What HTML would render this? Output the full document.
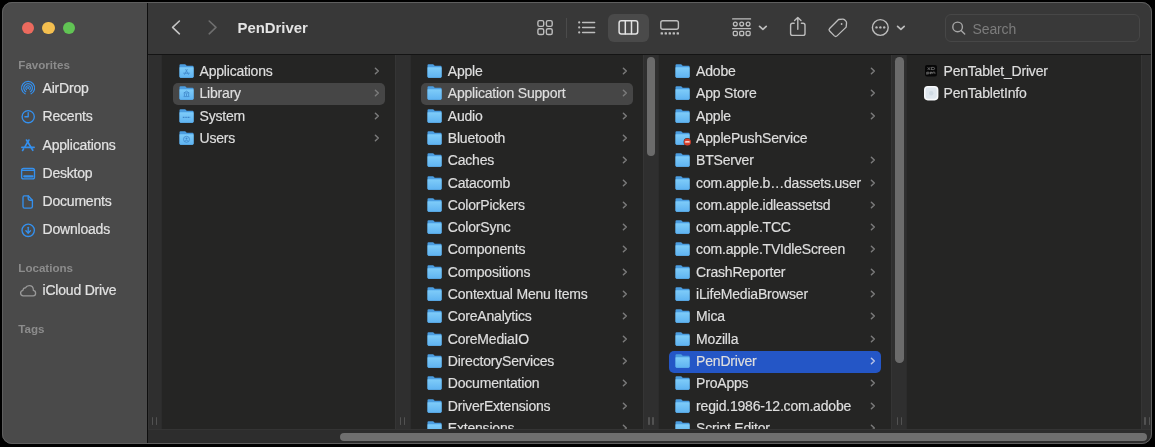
<!DOCTYPE html><html><head><meta charset="utf-8"><style>
*{margin:0;padding:0;box-sizing:border-box}
html,body{width:1155px;height:447px;background:#000;overflow:hidden}
body{font-family:"Liberation Sans",sans-serif;color:#dedede;position:relative}
.row,.sitem{letter-spacing:-0.2px}
.row,.sitem{-webkit-text-stroke:0.2px currentColor}
.win{position:absolute;left:2px;top:2px;width:1150px;height:442px;border-radius:10px;overflow:hidden;background:#262626;will-change:transform}
.abs{position:absolute}
.side{position:absolute;left:0;top:0;width:147px;height:447px;background:#4a4a4a}
.sdiv{position:absolute;left:147px;top:0;width:1px;height:447px;background:#0e0e0e}
.tb{position:absolute;left:148px;top:0;width:1007px;height:54px;background:#383838}
.tbline{position:absolute;left:148px;top:54px;width:1007px;height:1px;background:#141414}
.colbg{position:absolute;top:55px;height:374px;background:#252524}
.strip{position:absolute;top:55px;height:374px;background:#2f2f2f;border-left:1px solid #353535;border-right:1px solid #2c2c2c}
.handle{position:absolute;width:1.4px;height:7.4px;border-radius:0.7px;background:#525252}
.row{position:absolute;height:22.4px;font-size:14px;line-height:22.4px;white-space:nowrap}
.sel{position:absolute;height:21.6px;border-radius:5px;background:#464646}
.selb{background:#2456c6}
.fi{position:absolute;left:0;top:4px;overflow:visible}
.ch{position:absolute;top:7px}
.lbl{position:absolute;left:21px;top:0}
.sb{position:absolute;width:8.6px;border-radius:4.3px;background:#6b6b6b}
.htrack{position:absolute;left:148px;top:429px;width:1007px;height:15px;background:#2d2d2d;border-top:1px solid #343434}
.hthumb{position:absolute;left:339.5px;top:432.9px;width:807.5px;height:7.9px;border-radius:4px;background:#6f6f6f}
.border{position:absolute;left:2px;top:2px;width:1150px;height:442px;border-radius:10px;border:1px solid #5f5f5f;pointer-events:none}
.shead{position:absolute;left:18.3px;font-size:11.6px;font-weight:bold;color:#8c8c8c}
.sitem{position:absolute;left:42.5px;font-size:14px;line-height:16px;color:#e2e2e2}
.sico{position:absolute;left:18px}
</style></head><body>
<svg width="0" height="0" style="position:absolute"><defs><linearGradient id="fg" x1="0" y1="0" x2="0" y2="1"><stop offset="0" stop-color="#63b6f1"/><stop offset="0.12" stop-color="#7ccaf8"/><stop offset="1" stop-color="#5fb3f1"/></linearGradient></defs></svg>
<div class="win"><div class="abs" style="left:-2px;top:-2px;width:1155px;height:447px">

<div class="side"></div><div class="sdiv"></div>
<div class="abs" style="left:22px;top:21.7px;width:12.4px;height:12.4px;border-radius:50%;background:#ec6a5e"></div>
<div class="abs" style="left:42.3px;top:21.7px;width:12.4px;height:12.4px;border-radius:50%;background:#f4bf4f"></div>
<div class="abs" style="left:62.6px;top:21.7px;width:12.4px;height:12.4px;border-radius:50%;background:#61c454"></div>
<div class="shead" style="top:58px">Favorites</div>
<svg class="abs" style="left:19px;top:79px" width="18" height="18" viewBox="19 79 18 18" fill="none" stroke="#3490ee" stroke-width="1.2" stroke-linecap="round"><path d="M25.13 93.84 A6.55 6.55 0 1 1 31.07 93.84"/><path d="M25.73 91.65 A4.35 4.35 0 1 1 30.47 91.65"/><path d="M26.51 89.59 A2.25 2.25 0 1 1 29.69 89.59"/><circle cx="28.1" cy="88.0" r="1.0" fill="#3490ee" stroke="none"/></svg>
<div class="sitem" style="top:80.30px">AirDrop</div>
<svg class="abs" style="left:19px;top:107px" width="18" height="18" viewBox="19 107 18 18" fill="none" stroke="#3490ee" stroke-width="1.35" stroke-linecap="round" stroke-linejoin="round"><circle cx="28.2" cy="116.7" r="6.1"/><path d="M28.2 112.6 V116.7 H24.9"/></svg>
<div class="sitem" style="top:108.45px">Recents</div>
<svg class="abs" style="left:19px;top:136px" width="18" height="18" viewBox="19 136 18 18" fill="none" stroke="#3490ee" stroke-width="1.65" stroke-linecap="round"><path d="M28.9 140 L25.0 146.6"/><path d="M23.6 148.9 L22.6 150.5"/><path d="M26.5 140 L32.8 150.3"/><path d="M21.9 147.4 H34.1"/></svg>
<div class="sitem" style="top:136.60px">Applications</div>
<svg class="abs" style="left:19px;top:164px" width="18" height="18" viewBox="19 164 18 18" fill="none" stroke="#3490ee" stroke-width="1.35" stroke-linecap="round"><rect x="21.6" y="168.5" width="12.9" height="10.4" rx="2"/><path d="M21.8 170.4 H34.3"/><path d="M24.3 176.3 H32.5" stroke-width="2.3"/></svg>
<div class="sitem" style="top:164.75px">Desktop</div>
<svg class="abs" style="left:19px;top:192px" width="18" height="18" viewBox="19 192 18 18" fill="none" stroke="#3490ee" stroke-width="1.35" stroke-linecap="round" stroke-linejoin="round"><path d="M24.3 195.8 H28.2 L32.4 200.2 V206.4 Q32.4 208.1 30.7 208.1 H24.6 Q23.0 208.1 23.0 206.4 V197.5 Q23.0 195.8 24.3 195.8 Z"/><path d="M28.2 196.0 V198.8 Q28.2 200.2 29.6 200.2 H32.2"/></svg>
<div class="sitem" style="top:192.90px">Documents</div>
<svg class="abs" style="left:19px;top:221px" width="18" height="18" viewBox="19 221 18 18" fill="none" stroke="#3490ee" stroke-width="1.35" stroke-linecap="round" stroke-linejoin="round"><circle cx="28.2" cy="230.3" r="6.2"/><path d="M28.2 227.3 V233"/><path d="M25.9 230.8 L28.2 233.1 L30.5 230.8"/></svg>
<div class="sitem" style="top:221.05px">Downloads</div>
<div class="shead" style="top:261.3px">Locations</div>
<svg class="abs" style="left:18px;top:282px" width="20" height="17" viewBox="18 282 20 17" fill="none" stroke="#999" stroke-width="1.3" stroke-linejoin="round"><path d="M23.2 295.8 H33.2 Q35.6 295.8 35.6 293.2 Q35.6 290.8 33.4 290.4 Q33.4 285.6 29.2 285.6 Q26.6 285.6 25.4 287.9 Q23.4 287.6 22.9 290.3 Q20.6 290.9 20.6 293.1 Q20.6 295.8 23.2 295.8 Z"/></svg>
<div class="sitem" style="top:282.3px">iCloud Drive</div>
<div class="shead" style="top:322.1px">Tags</div>
<div class="tb"></div><div class="tbline"></div>
<div class="abs" style="left:237.5px;top:20.3px;font-size:14.9px;line-height:17px;font-weight:bold;color:#e4e4e4">PenDriver</div>
<svg class="abs" style="left:160px;top:12px" width="70" height="30" viewBox="160 12 70 30" fill="none" stroke-linecap="round" stroke-linejoin="round"><path d="M179.4 21 L172.6 27.4 L179.4 33.8" stroke="#c4c4c4" stroke-width="1.6"/><path d="M209.2 21 L216 27.4 L209.2 33.8" stroke="#6e6e6e" stroke-width="1.6"/></svg>
<div class="abs" style="left:607.6px;top:13.6px;width:41.2px;height:28.7px;border-radius:6px;background:#4a4a4a"></div>
<div class="abs" style="left:566px;top:18px;width:1px;height:20px;background:#4b4b4b"></div>
<svg class="abs" style="left:520px;top:8px" width="420" height="40" viewBox="520 8 420 40" fill="none" stroke="#bdbdbd" stroke-width="1.4" stroke-linecap="round" stroke-linejoin="round">
<rect x="537.9" y="20.6" width="5.8" height="5.8" rx="1.6"/><rect x="546.4" y="20.6" width="5.8" height="5.8" rx="1.6"/>
<rect x="537.9" y="28.7" width="5.8" height="5.8" rx="1.6"/><rect x="546.4" y="28.7" width="5.8" height="5.8" rx="1.6"/>
<circle cx="579.2" cy="22.4" r="1.1" fill="#bdbdbd" stroke="none"/><circle cx="579.2" cy="27.4" r="1.1" fill="#bdbdbd" stroke="none"/><circle cx="579.2" cy="32.4" r="1.1" fill="#bdbdbd" stroke="none"/>
<path d="M582.6 22.4 H594.6 M582.6 27.4 H594.6 M582.6 32.4 H594.6" stroke-width="1.5"/>
<g stroke="#e2e2e2" stroke-width="1.5"><rect x="619.1" y="20.8" width="18.6" height="13.2" rx="2.2"/><path d="M625.3 21 V33.8 M631.5 21 V33.8"/></g>
<rect x="660.8" y="20.7" width="17.6" height="8.6" rx="2"/>
<g fill="#bdbdbd" stroke="none"><rect x="660.6" y="32.2" width="2.4" height="2.4" rx="0.6"/><rect x="664.6" y="32.2" width="2.4" height="2.4" rx="0.6"/><rect x="668.6" y="32.2" width="2.4" height="2.4" rx="0.6"/><rect x="672.6" y="32.2" width="2.4" height="2.4" rx="0.6"/><rect x="676.6" y="32.2" width="2.4" height="2.4" rx="0.6"/></g>
<path d="M732.6 18.9 H750.6 M732.6 28.7 H750.6" stroke-width="1.2"/>
<circle cx="735.3" cy="24.1" r="1.9" stroke-width="1.3"/><circle cx="741.7" cy="24.1" r="1.9" stroke-width="1.3"/><circle cx="748.1" cy="24.1" r="1.9" stroke-width="1.3"/>
<rect x="733.3" y="31.3" width="4" height="4.2" rx="1" stroke-width="1.3"/><rect x="739.7" y="31.3" width="4" height="4.2" rx="1" stroke-width="1.3"/><rect x="746.1" y="31.3" width="4" height="4.2" rx="1" stroke-width="1.3"/>
<path d="M759.6 26.4 L762.9 29.4 L766.2 26.4" stroke-width="1.7"/>
<path d="M794.2 23.2 H792.6 Q790.6 23.2 790.6 25.2 V33.4 Q790.6 35.4 792.6 35.4 H803.0 Q805.0 35.4 805.0 33.4 V25.2 Q805.0 23.2 803.0 23.2 H801.4"/>
<path d="M797.8 29.2 V17.6 M794.6 20.6 L797.8 17.4 L801.0 20.6"/>
<path transform="translate(837.6 27.6) scale(0.94) translate(-837.6 -27.6)" d="M838.6 19.0 L843.0 18.6 Q844.2 18.5 845.0 19.3 L846.4 20.7 Q847.2 21.5 847.1 22.7 L846.7 27.1 L837.0 36.4 Q835.6 37.7 834.2 36.4 L829.1 31.3 Q827.8 29.9 829.1 28.6 Z"/>
<circle cx="841.6" cy="24.0" r="0.9" fill="#bdbdbd" stroke="none"/>
<circle cx="880.3" cy="27.5" r="7.9"/>
<circle cx="876.5" cy="27.4" r="1.2" fill="#bdbdbd" stroke="none"/><circle cx="880.4" cy="27.4" r="1.2" fill="#bdbdbd" stroke="none"/><circle cx="884.2" cy="27.4" r="1.2" fill="#bdbdbd" stroke="none"/>
<path d="M897.6 26.4 L900.9 29.4 L904.2 26.4" stroke-width="1.7"/>
</svg>
<div class="colbg" style="left:148px;width:1007px"></div>
<div class="strip" style="left:148px;width:14px"></div>
<div class="strip" style="left:394.8px;width:16px"></div>
<div class="strip" style="left:643.1px;width:16px"></div>
<div class="strip" style="left:891.4px;width:16px"></div>
<div class="strip" style="left:1140.5px;width:14px"></div>
<div class="handle" style="left:151.60px;top:417.4px"></div><div class="handle" style="left:155.70px;top:417.4px"></div>
<div class="handle" style="left:399.90px;top:417.4px"></div><div class="handle" style="left:404.00px;top:417.4px"></div>
<div class="handle" style="left:648.20px;top:417.4px"></div><div class="handle" style="left:652.30px;top:417.4px"></div>
<div class="handle" style="left:896.50px;top:417.4px"></div><div class="handle" style="left:900.60px;top:417.4px"></div>
<div class="handle" style="left:1144.40px;top:417.4px"></div><div class="handle" style="left:1148.50px;top:417.4px"></div>
<div class="row" style="left:178.5px;top:60.0px;width:210px"><svg class="fi" width="15" height="14" viewBox="0 0 15 14"><path d="M0.5 1.2 Q0.5 0.2 1.5 0.2 H5.8 Q6.4 0.2 6.9 0.7 L7.6 1.7 H13.5 Q14.6 1.7 14.6 2.8 V12.6 Q14.6 13.7 13.5 13.7 H1.6 Q0.5 13.7 0.5 12.6 Z" fill="#4b9de0"/><path d="M0.5 3.7 Q0.5 2.9 1.3 2.9 H13.8 Q14.6 2.9 14.6 3.7 V12.6 Q14.6 13.7 13.5 13.7 H1.6 Q0.5 13.7 0.5 12.6 Z" fill="url(#fg)"/><path d="M8.2 5.6 L5.6 10.4 M6.8 5.6 L9.4 10.4 M4.6 9.2 H10.4" stroke="#3f86c9" stroke-width="0.8" fill="none" stroke-linecap="round"/></svg><span class="lbl">Applications</span><svg class="ch" style="left:195.3px" width="6" height="8" viewBox="0 0 6 8"><path d="M1.4 1.2 L4.3 4 L1.4 6.8" fill="none" stroke="#7b7b7b" stroke-width="1.5" stroke-linecap="round" stroke-linejoin="round"/></svg></div>
<div class="sel" style="left:172.6px;top:83.21px;width:212.3px"></div>
<div class="row" style="left:178.5px;top:82.31px;width:210px"><svg class="fi" width="15" height="14" viewBox="0 0 15 14"><path d="M0.5 1.2 Q0.5 0.2 1.5 0.2 H5.8 Q6.4 0.2 6.9 0.7 L7.6 1.7 H13.5 Q14.6 1.7 14.6 2.8 V12.6 Q14.6 13.7 13.5 13.7 H1.6 Q0.5 13.7 0.5 12.6 Z" fill="#4b9de0"/><path d="M0.5 3.7 Q0.5 2.9 1.3 2.9 H13.8 Q14.6 2.9 14.6 3.7 V12.6 Q14.6 13.7 13.5 13.7 H1.6 Q0.5 13.7 0.5 12.6 Z" fill="url(#fg)"/><path d="M4.8 7.0 L7.5 5.2 L10.2 7.0 Z M5.4 7.6 V10.0 M7.5 7.6 V10.0 M9.6 7.6 V10.0 M4.6 10.6 H10.4" stroke="#3f86c9" stroke-width="0.8" fill="none" stroke-linejoin="round"/></svg><span class="lbl">Library</span><svg class="ch" style="left:195.3px" width="6" height="8" viewBox="0 0 6 8"><path d="M1.4 1.2 L4.3 4 L1.4 6.8" fill="none" stroke="#7b7b7b" stroke-width="1.5" stroke-linecap="round" stroke-linejoin="round"/></svg></div>
<div class="row" style="left:178.5px;top:104.62px;width:210px"><svg class="fi" width="15" height="14" viewBox="0 0 15 14"><path d="M0.5 1.2 Q0.5 0.2 1.5 0.2 H5.8 Q6.4 0.2 6.9 0.7 L7.6 1.7 H13.5 Q14.6 1.7 14.6 2.8 V12.6 Q14.6 13.7 13.5 13.7 H1.6 Q0.5 13.7 0.5 12.6 Z" fill="#4b9de0"/><path d="M0.5 3.7 Q0.5 2.9 1.3 2.9 H13.8 Q14.6 2.9 14.6 3.7 V12.6 Q14.6 13.7 13.5 13.7 H1.6 Q0.5 13.7 0.5 12.6 Z" fill="url(#fg)"/><path d="M3.8 8.3 H11.2" stroke="#3f86c9" stroke-width="1.2" stroke-dasharray="1.2 0.5" fill="none"/></svg><span class="lbl">System</span><svg class="ch" style="left:195.3px" width="6" height="8" viewBox="0 0 6 8"><path d="M1.4 1.2 L4.3 4 L1.4 6.8" fill="none" stroke="#7b7b7b" stroke-width="1.5" stroke-linecap="round" stroke-linejoin="round"/></svg></div>
<div class="row" style="left:178.5px;top:126.92999999999999px;width:210px"><svg class="fi" width="15" height="14" viewBox="0 0 15 14"><path d="M0.5 1.2 Q0.5 0.2 1.5 0.2 H5.8 Q6.4 0.2 6.9 0.7 L7.6 1.7 H13.5 Q14.6 1.7 14.6 2.8 V12.6 Q14.6 13.7 13.5 13.7 H1.6 Q0.5 13.7 0.5 12.6 Z" fill="#4b9de0"/><path d="M0.5 3.7 Q0.5 2.9 1.3 2.9 H13.8 Q14.6 2.9 14.6 3.7 V12.6 Q14.6 13.7 13.5 13.7 H1.6 Q0.5 13.7 0.5 12.6 Z" fill="url(#fg)"/><circle cx="7.5" cy="8.3" r="3.0" stroke="#3f86c9" stroke-width="0.8" fill="none"/><circle cx="7.5" cy="7.4" r="1.0" fill="#3f86c9"/><path d="M5.6 10.2 Q7.5 8.4 9.4 10.2" stroke="#3f86c9" stroke-width="0.8" fill="none"/></svg><span class="lbl">Users</span><svg class="ch" style="left:195.3px" width="6" height="8" viewBox="0 0 6 8"><path d="M1.4 1.2 L4.3 4 L1.4 6.8" fill="none" stroke="#7b7b7b" stroke-width="1.5" stroke-linecap="round" stroke-linejoin="round"/></svg></div>
<div class="row" style="left:426.8px;top:60.0px;width:210px"><svg class="fi" width="15" height="14" viewBox="0 0 15 14"><path d="M0.5 1.2 Q0.5 0.2 1.5 0.2 H5.8 Q6.4 0.2 6.9 0.7 L7.6 1.7 H13.5 Q14.6 1.7 14.6 2.8 V12.6 Q14.6 13.7 13.5 13.7 H1.6 Q0.5 13.7 0.5 12.6 Z" fill="#4b9de0"/><path d="M0.5 3.7 Q0.5 2.9 1.3 2.9 H13.8 Q14.6 2.9 14.6 3.7 V12.6 Q14.6 13.7 13.5 13.7 H1.6 Q0.5 13.7 0.5 12.6 Z" fill="url(#fg)"/></svg><span class="lbl">Apple</span><svg class="ch" style="left:195.3px" width="6" height="8" viewBox="0 0 6 8"><path d="M1.4 1.2 L4.3 4 L1.4 6.8" fill="none" stroke="#7b7b7b" stroke-width="1.5" stroke-linecap="round" stroke-linejoin="round"/></svg></div>
<div class="sel" style="left:420.90000000000003px;top:83.21px;width:212.3px"></div>
<div class="row" style="left:426.8px;top:82.31px;width:210px"><svg class="fi" width="15" height="14" viewBox="0 0 15 14"><path d="M0.5 1.2 Q0.5 0.2 1.5 0.2 H5.8 Q6.4 0.2 6.9 0.7 L7.6 1.7 H13.5 Q14.6 1.7 14.6 2.8 V12.6 Q14.6 13.7 13.5 13.7 H1.6 Q0.5 13.7 0.5 12.6 Z" fill="#4b9de0"/><path d="M0.5 3.7 Q0.5 2.9 1.3 2.9 H13.8 Q14.6 2.9 14.6 3.7 V12.6 Q14.6 13.7 13.5 13.7 H1.6 Q0.5 13.7 0.5 12.6 Z" fill="url(#fg)"/></svg><span class="lbl">Application Support</span><svg class="ch" style="left:195.3px" width="6" height="8" viewBox="0 0 6 8"><path d="M1.4 1.2 L4.3 4 L1.4 6.8" fill="none" stroke="#7b7b7b" stroke-width="1.5" stroke-linecap="round" stroke-linejoin="round"/></svg></div>
<div class="row" style="left:426.8px;top:104.62px;width:210px"><svg class="fi" width="15" height="14" viewBox="0 0 15 14"><path d="M0.5 1.2 Q0.5 0.2 1.5 0.2 H5.8 Q6.4 0.2 6.9 0.7 L7.6 1.7 H13.5 Q14.6 1.7 14.6 2.8 V12.6 Q14.6 13.7 13.5 13.7 H1.6 Q0.5 13.7 0.5 12.6 Z" fill="#4b9de0"/><path d="M0.5 3.7 Q0.5 2.9 1.3 2.9 H13.8 Q14.6 2.9 14.6 3.7 V12.6 Q14.6 13.7 13.5 13.7 H1.6 Q0.5 13.7 0.5 12.6 Z" fill="url(#fg)"/></svg><span class="lbl">Audio</span><svg class="ch" style="left:195.3px" width="6" height="8" viewBox="0 0 6 8"><path d="M1.4 1.2 L4.3 4 L1.4 6.8" fill="none" stroke="#7b7b7b" stroke-width="1.5" stroke-linecap="round" stroke-linejoin="round"/></svg></div>
<div class="row" style="left:426.8px;top:126.92999999999999px;width:210px"><svg class="fi" width="15" height="14" viewBox="0 0 15 14"><path d="M0.5 1.2 Q0.5 0.2 1.5 0.2 H5.8 Q6.4 0.2 6.9 0.7 L7.6 1.7 H13.5 Q14.6 1.7 14.6 2.8 V12.6 Q14.6 13.7 13.5 13.7 H1.6 Q0.5 13.7 0.5 12.6 Z" fill="#4b9de0"/><path d="M0.5 3.7 Q0.5 2.9 1.3 2.9 H13.8 Q14.6 2.9 14.6 3.7 V12.6 Q14.6 13.7 13.5 13.7 H1.6 Q0.5 13.7 0.5 12.6 Z" fill="url(#fg)"/></svg><span class="lbl">Bluetooth</span><svg class="ch" style="left:195.3px" width="6" height="8" viewBox="0 0 6 8"><path d="M1.4 1.2 L4.3 4 L1.4 6.8" fill="none" stroke="#7b7b7b" stroke-width="1.5" stroke-linecap="round" stroke-linejoin="round"/></svg></div>
<div class="row" style="left:426.8px;top:149.24px;width:210px"><svg class="fi" width="15" height="14" viewBox="0 0 15 14"><path d="M0.5 1.2 Q0.5 0.2 1.5 0.2 H5.8 Q6.4 0.2 6.9 0.7 L7.6 1.7 H13.5 Q14.6 1.7 14.6 2.8 V12.6 Q14.6 13.7 13.5 13.7 H1.6 Q0.5 13.7 0.5 12.6 Z" fill="#4b9de0"/><path d="M0.5 3.7 Q0.5 2.9 1.3 2.9 H13.8 Q14.6 2.9 14.6 3.7 V12.6 Q14.6 13.7 13.5 13.7 H1.6 Q0.5 13.7 0.5 12.6 Z" fill="url(#fg)"/></svg><span class="lbl">Caches</span><svg class="ch" style="left:195.3px" width="6" height="8" viewBox="0 0 6 8"><path d="M1.4 1.2 L4.3 4 L1.4 6.8" fill="none" stroke="#7b7b7b" stroke-width="1.5" stroke-linecap="round" stroke-linejoin="round"/></svg></div>
<div class="row" style="left:426.8px;top:171.55px;width:210px"><svg class="fi" width="15" height="14" viewBox="0 0 15 14"><path d="M0.5 1.2 Q0.5 0.2 1.5 0.2 H5.8 Q6.4 0.2 6.9 0.7 L7.6 1.7 H13.5 Q14.6 1.7 14.6 2.8 V12.6 Q14.6 13.7 13.5 13.7 H1.6 Q0.5 13.7 0.5 12.6 Z" fill="#4b9de0"/><path d="M0.5 3.7 Q0.5 2.9 1.3 2.9 H13.8 Q14.6 2.9 14.6 3.7 V12.6 Q14.6 13.7 13.5 13.7 H1.6 Q0.5 13.7 0.5 12.6 Z" fill="url(#fg)"/></svg><span class="lbl">Catacomb</span><svg class="ch" style="left:195.3px" width="6" height="8" viewBox="0 0 6 8"><path d="M1.4 1.2 L4.3 4 L1.4 6.8" fill="none" stroke="#7b7b7b" stroke-width="1.5" stroke-linecap="round" stroke-linejoin="round"/></svg></div>
<div class="row" style="left:426.8px;top:193.85999999999999px;width:210px"><svg class="fi" width="15" height="14" viewBox="0 0 15 14"><path d="M0.5 1.2 Q0.5 0.2 1.5 0.2 H5.8 Q6.4 0.2 6.9 0.7 L7.6 1.7 H13.5 Q14.6 1.7 14.6 2.8 V12.6 Q14.6 13.7 13.5 13.7 H1.6 Q0.5 13.7 0.5 12.6 Z" fill="#4b9de0"/><path d="M0.5 3.7 Q0.5 2.9 1.3 2.9 H13.8 Q14.6 2.9 14.6 3.7 V12.6 Q14.6 13.7 13.5 13.7 H1.6 Q0.5 13.7 0.5 12.6 Z" fill="url(#fg)"/></svg><span class="lbl">ColorPickers</span><svg class="ch" style="left:195.3px" width="6" height="8" viewBox="0 0 6 8"><path d="M1.4 1.2 L4.3 4 L1.4 6.8" fill="none" stroke="#7b7b7b" stroke-width="1.5" stroke-linecap="round" stroke-linejoin="round"/></svg></div>
<div class="row" style="left:426.8px;top:216.17px;width:210px"><svg class="fi" width="15" height="14" viewBox="0 0 15 14"><path d="M0.5 1.2 Q0.5 0.2 1.5 0.2 H5.8 Q6.4 0.2 6.9 0.7 L7.6 1.7 H13.5 Q14.6 1.7 14.6 2.8 V12.6 Q14.6 13.7 13.5 13.7 H1.6 Q0.5 13.7 0.5 12.6 Z" fill="#4b9de0"/><path d="M0.5 3.7 Q0.5 2.9 1.3 2.9 H13.8 Q14.6 2.9 14.6 3.7 V12.6 Q14.6 13.7 13.5 13.7 H1.6 Q0.5 13.7 0.5 12.6 Z" fill="url(#fg)"/></svg><span class="lbl">ColorSync</span><svg class="ch" style="left:195.3px" width="6" height="8" viewBox="0 0 6 8"><path d="M1.4 1.2 L4.3 4 L1.4 6.8" fill="none" stroke="#7b7b7b" stroke-width="1.5" stroke-linecap="round" stroke-linejoin="round"/></svg></div>
<div class="row" style="left:426.8px;top:238.48px;width:210px"><svg class="fi" width="15" height="14" viewBox="0 0 15 14"><path d="M0.5 1.2 Q0.5 0.2 1.5 0.2 H5.8 Q6.4 0.2 6.9 0.7 L7.6 1.7 H13.5 Q14.6 1.7 14.6 2.8 V12.6 Q14.6 13.7 13.5 13.7 H1.6 Q0.5 13.7 0.5 12.6 Z" fill="#4b9de0"/><path d="M0.5 3.7 Q0.5 2.9 1.3 2.9 H13.8 Q14.6 2.9 14.6 3.7 V12.6 Q14.6 13.7 13.5 13.7 H1.6 Q0.5 13.7 0.5 12.6 Z" fill="url(#fg)"/></svg><span class="lbl">Components</span><svg class="ch" style="left:195.3px" width="6" height="8" viewBox="0 0 6 8"><path d="M1.4 1.2 L4.3 4 L1.4 6.8" fill="none" stroke="#7b7b7b" stroke-width="1.5" stroke-linecap="round" stroke-linejoin="round"/></svg></div>
<div class="row" style="left:426.8px;top:260.78999999999996px;width:210px"><svg class="fi" width="15" height="14" viewBox="0 0 15 14"><path d="M0.5 1.2 Q0.5 0.2 1.5 0.2 H5.8 Q6.4 0.2 6.9 0.7 L7.6 1.7 H13.5 Q14.6 1.7 14.6 2.8 V12.6 Q14.6 13.7 13.5 13.7 H1.6 Q0.5 13.7 0.5 12.6 Z" fill="#4b9de0"/><path d="M0.5 3.7 Q0.5 2.9 1.3 2.9 H13.8 Q14.6 2.9 14.6 3.7 V12.6 Q14.6 13.7 13.5 13.7 H1.6 Q0.5 13.7 0.5 12.6 Z" fill="url(#fg)"/></svg><span class="lbl">Compositions</span><svg class="ch" style="left:195.3px" width="6" height="8" viewBox="0 0 6 8"><path d="M1.4 1.2 L4.3 4 L1.4 6.8" fill="none" stroke="#7b7b7b" stroke-width="1.5" stroke-linecap="round" stroke-linejoin="round"/></svg></div>
<div class="row" style="left:426.8px;top:283.1px;width:210px"><svg class="fi" width="15" height="14" viewBox="0 0 15 14"><path d="M0.5 1.2 Q0.5 0.2 1.5 0.2 H5.8 Q6.4 0.2 6.9 0.7 L7.6 1.7 H13.5 Q14.6 1.7 14.6 2.8 V12.6 Q14.6 13.7 13.5 13.7 H1.6 Q0.5 13.7 0.5 12.6 Z" fill="#4b9de0"/><path d="M0.5 3.7 Q0.5 2.9 1.3 2.9 H13.8 Q14.6 2.9 14.6 3.7 V12.6 Q14.6 13.7 13.5 13.7 H1.6 Q0.5 13.7 0.5 12.6 Z" fill="url(#fg)"/></svg><span class="lbl">Contextual Menu Items</span><svg class="ch" style="left:195.3px" width="6" height="8" viewBox="0 0 6 8"><path d="M1.4 1.2 L4.3 4 L1.4 6.8" fill="none" stroke="#7b7b7b" stroke-width="1.5" stroke-linecap="round" stroke-linejoin="round"/></svg></div>
<div class="row" style="left:426.8px;top:305.40999999999997px;width:210px"><svg class="fi" width="15" height="14" viewBox="0 0 15 14"><path d="M0.5 1.2 Q0.5 0.2 1.5 0.2 H5.8 Q6.4 0.2 6.9 0.7 L7.6 1.7 H13.5 Q14.6 1.7 14.6 2.8 V12.6 Q14.6 13.7 13.5 13.7 H1.6 Q0.5 13.7 0.5 12.6 Z" fill="#4b9de0"/><path d="M0.5 3.7 Q0.5 2.9 1.3 2.9 H13.8 Q14.6 2.9 14.6 3.7 V12.6 Q14.6 13.7 13.5 13.7 H1.6 Q0.5 13.7 0.5 12.6 Z" fill="url(#fg)"/></svg><span class="lbl">CoreAnalytics</span><svg class="ch" style="left:195.3px" width="6" height="8" viewBox="0 0 6 8"><path d="M1.4 1.2 L4.3 4 L1.4 6.8" fill="none" stroke="#7b7b7b" stroke-width="1.5" stroke-linecap="round" stroke-linejoin="round"/></svg></div>
<div class="row" style="left:426.8px;top:327.71999999999997px;width:210px"><svg class="fi" width="15" height="14" viewBox="0 0 15 14"><path d="M0.5 1.2 Q0.5 0.2 1.5 0.2 H5.8 Q6.4 0.2 6.9 0.7 L7.6 1.7 H13.5 Q14.6 1.7 14.6 2.8 V12.6 Q14.6 13.7 13.5 13.7 H1.6 Q0.5 13.7 0.5 12.6 Z" fill="#4b9de0"/><path d="M0.5 3.7 Q0.5 2.9 1.3 2.9 H13.8 Q14.6 2.9 14.6 3.7 V12.6 Q14.6 13.7 13.5 13.7 H1.6 Q0.5 13.7 0.5 12.6 Z" fill="url(#fg)"/></svg><span class="lbl">CoreMediaIO</span><svg class="ch" style="left:195.3px" width="6" height="8" viewBox="0 0 6 8"><path d="M1.4 1.2 L4.3 4 L1.4 6.8" fill="none" stroke="#7b7b7b" stroke-width="1.5" stroke-linecap="round" stroke-linejoin="round"/></svg></div>
<div class="row" style="left:426.8px;top:350.03px;width:210px"><svg class="fi" width="15" height="14" viewBox="0 0 15 14"><path d="M0.5 1.2 Q0.5 0.2 1.5 0.2 H5.8 Q6.4 0.2 6.9 0.7 L7.6 1.7 H13.5 Q14.6 1.7 14.6 2.8 V12.6 Q14.6 13.7 13.5 13.7 H1.6 Q0.5 13.7 0.5 12.6 Z" fill="#4b9de0"/><path d="M0.5 3.7 Q0.5 2.9 1.3 2.9 H13.8 Q14.6 2.9 14.6 3.7 V12.6 Q14.6 13.7 13.5 13.7 H1.6 Q0.5 13.7 0.5 12.6 Z" fill="url(#fg)"/></svg><span class="lbl">DirectoryServices</span><svg class="ch" style="left:195.3px" width="6" height="8" viewBox="0 0 6 8"><path d="M1.4 1.2 L4.3 4 L1.4 6.8" fill="none" stroke="#7b7b7b" stroke-width="1.5" stroke-linecap="round" stroke-linejoin="round"/></svg></div>
<div class="row" style="left:426.8px;top:372.34px;width:210px"><svg class="fi" width="15" height="14" viewBox="0 0 15 14"><path d="M0.5 1.2 Q0.5 0.2 1.5 0.2 H5.8 Q6.4 0.2 6.9 0.7 L7.6 1.7 H13.5 Q14.6 1.7 14.6 2.8 V12.6 Q14.6 13.7 13.5 13.7 H1.6 Q0.5 13.7 0.5 12.6 Z" fill="#4b9de0"/><path d="M0.5 3.7 Q0.5 2.9 1.3 2.9 H13.8 Q14.6 2.9 14.6 3.7 V12.6 Q14.6 13.7 13.5 13.7 H1.6 Q0.5 13.7 0.5 12.6 Z" fill="url(#fg)"/></svg><span class="lbl">Documentation</span><svg class="ch" style="left:195.3px" width="6" height="8" viewBox="0 0 6 8"><path d="M1.4 1.2 L4.3 4 L1.4 6.8" fill="none" stroke="#7b7b7b" stroke-width="1.5" stroke-linecap="round" stroke-linejoin="round"/></svg></div>
<div class="row" style="left:426.8px;top:394.65px;width:210px"><svg class="fi" width="15" height="14" viewBox="0 0 15 14"><path d="M0.5 1.2 Q0.5 0.2 1.5 0.2 H5.8 Q6.4 0.2 6.9 0.7 L7.6 1.7 H13.5 Q14.6 1.7 14.6 2.8 V12.6 Q14.6 13.7 13.5 13.7 H1.6 Q0.5 13.7 0.5 12.6 Z" fill="#4b9de0"/><path d="M0.5 3.7 Q0.5 2.9 1.3 2.9 H13.8 Q14.6 2.9 14.6 3.7 V12.6 Q14.6 13.7 13.5 13.7 H1.6 Q0.5 13.7 0.5 12.6 Z" fill="url(#fg)"/></svg><span class="lbl">DriverExtensions</span><svg class="ch" style="left:195.3px" width="6" height="8" viewBox="0 0 6 8"><path d="M1.4 1.2 L4.3 4 L1.4 6.8" fill="none" stroke="#7b7b7b" stroke-width="1.5" stroke-linecap="round" stroke-linejoin="round"/></svg></div>
<div class="row" style="left:426.8px;top:416.96px;width:210px"><svg class="fi" width="15" height="14" viewBox="0 0 15 14"><path d="M0.5 1.2 Q0.5 0.2 1.5 0.2 H5.8 Q6.4 0.2 6.9 0.7 L7.6 1.7 H13.5 Q14.6 1.7 14.6 2.8 V12.6 Q14.6 13.7 13.5 13.7 H1.6 Q0.5 13.7 0.5 12.6 Z" fill="#4b9de0"/><path d="M0.5 3.7 Q0.5 2.9 1.3 2.9 H13.8 Q14.6 2.9 14.6 3.7 V12.6 Q14.6 13.7 13.5 13.7 H1.6 Q0.5 13.7 0.5 12.6 Z" fill="url(#fg)"/></svg><span class="lbl">Extensions</span><svg class="ch" style="left:195.3px" width="6" height="8" viewBox="0 0 6 8"><path d="M1.4 1.2 L4.3 4 L1.4 6.8" fill="none" stroke="#7b7b7b" stroke-width="1.5" stroke-linecap="round" stroke-linejoin="round"/></svg></div>
<div class="row" style="left:675.1px;top:60.0px;width:210px"><svg class="fi" width="15" height="14" viewBox="0 0 15 14"><path d="M0.5 1.2 Q0.5 0.2 1.5 0.2 H5.8 Q6.4 0.2 6.9 0.7 L7.6 1.7 H13.5 Q14.6 1.7 14.6 2.8 V12.6 Q14.6 13.7 13.5 13.7 H1.6 Q0.5 13.7 0.5 12.6 Z" fill="#4b9de0"/><path d="M0.5 3.7 Q0.5 2.9 1.3 2.9 H13.8 Q14.6 2.9 14.6 3.7 V12.6 Q14.6 13.7 13.5 13.7 H1.6 Q0.5 13.7 0.5 12.6 Z" fill="url(#fg)"/></svg><span class="lbl">Adobe</span><svg class="ch" style="left:195.3px" width="6" height="8" viewBox="0 0 6 8"><path d="M1.4 1.2 L4.3 4 L1.4 6.8" fill="none" stroke="#7b7b7b" stroke-width="1.5" stroke-linecap="round" stroke-linejoin="round"/></svg></div>
<div class="row" style="left:675.1px;top:82.31px;width:210px"><svg class="fi" width="15" height="14" viewBox="0 0 15 14"><path d="M0.5 1.2 Q0.5 0.2 1.5 0.2 H5.8 Q6.4 0.2 6.9 0.7 L7.6 1.7 H13.5 Q14.6 1.7 14.6 2.8 V12.6 Q14.6 13.7 13.5 13.7 H1.6 Q0.5 13.7 0.5 12.6 Z" fill="#4b9de0"/><path d="M0.5 3.7 Q0.5 2.9 1.3 2.9 H13.8 Q14.6 2.9 14.6 3.7 V12.6 Q14.6 13.7 13.5 13.7 H1.6 Q0.5 13.7 0.5 12.6 Z" fill="url(#fg)"/></svg><span class="lbl">App Store</span><svg class="ch" style="left:195.3px" width="6" height="8" viewBox="0 0 6 8"><path d="M1.4 1.2 L4.3 4 L1.4 6.8" fill="none" stroke="#7b7b7b" stroke-width="1.5" stroke-linecap="round" stroke-linejoin="round"/></svg></div>
<div class="row" style="left:675.1px;top:104.62px;width:210px"><svg class="fi" width="15" height="14" viewBox="0 0 15 14"><path d="M0.5 1.2 Q0.5 0.2 1.5 0.2 H5.8 Q6.4 0.2 6.9 0.7 L7.6 1.7 H13.5 Q14.6 1.7 14.6 2.8 V12.6 Q14.6 13.7 13.5 13.7 H1.6 Q0.5 13.7 0.5 12.6 Z" fill="#4b9de0"/><path d="M0.5 3.7 Q0.5 2.9 1.3 2.9 H13.8 Q14.6 2.9 14.6 3.7 V12.6 Q14.6 13.7 13.5 13.7 H1.6 Q0.5 13.7 0.5 12.6 Z" fill="url(#fg)"/></svg><span class="lbl">Apple</span><svg class="ch" style="left:195.3px" width="6" height="8" viewBox="0 0 6 8"><path d="M1.4 1.2 L4.3 4 L1.4 6.8" fill="none" stroke="#7b7b7b" stroke-width="1.5" stroke-linecap="round" stroke-linejoin="round"/></svg></div>
<div class="row" style="left:675.1px;top:126.92999999999999px;width:210px"><svg class="fi" width="15" height="14" viewBox="0 0 15 14"><path d="M0.5 1.2 Q0.5 0.2 1.5 0.2 H5.8 Q6.4 0.2 6.9 0.7 L7.6 1.7 H13.5 Q14.6 1.7 14.6 2.8 V12.6 Q14.6 13.7 13.5 13.7 H1.6 Q0.5 13.7 0.5 12.6 Z" fill="#4b9de0"/><path d="M0.5 3.7 Q0.5 2.9 1.3 2.9 H13.8 Q14.6 2.9 14.6 3.7 V12.6 Q14.6 13.7 13.5 13.7 H1.6 Q0.5 13.7 0.5 12.6 Z" fill="url(#fg)"/><circle cx="12.4" cy="10.9" r="3.8" fill="#2a2a2a"/><circle cx="12.4" cy="10.9" r="3.5" fill="#d9412d"/><rect x="10.1" y="10.3" width="4.6" height="1.3" rx="0.4" fill="#fff"/></svg><span class="lbl">ApplePushService</span></div>
<div class="row" style="left:675.1px;top:149.24px;width:210px"><svg class="fi" width="15" height="14" viewBox="0 0 15 14"><path d="M0.5 1.2 Q0.5 0.2 1.5 0.2 H5.8 Q6.4 0.2 6.9 0.7 L7.6 1.7 H13.5 Q14.6 1.7 14.6 2.8 V12.6 Q14.6 13.7 13.5 13.7 H1.6 Q0.5 13.7 0.5 12.6 Z" fill="#4b9de0"/><path d="M0.5 3.7 Q0.5 2.9 1.3 2.9 H13.8 Q14.6 2.9 14.6 3.7 V12.6 Q14.6 13.7 13.5 13.7 H1.6 Q0.5 13.7 0.5 12.6 Z" fill="url(#fg)"/></svg><span class="lbl">BTServer</span><svg class="ch" style="left:195.3px" width="6" height="8" viewBox="0 0 6 8"><path d="M1.4 1.2 L4.3 4 L1.4 6.8" fill="none" stroke="#7b7b7b" stroke-width="1.5" stroke-linecap="round" stroke-linejoin="round"/></svg></div>
<div class="row" style="left:675.1px;top:171.55px;width:210px"><svg class="fi" width="15" height="14" viewBox="0 0 15 14"><path d="M0.5 1.2 Q0.5 0.2 1.5 0.2 H5.8 Q6.4 0.2 6.9 0.7 L7.6 1.7 H13.5 Q14.6 1.7 14.6 2.8 V12.6 Q14.6 13.7 13.5 13.7 H1.6 Q0.5 13.7 0.5 12.6 Z" fill="#4b9de0"/><path d="M0.5 3.7 Q0.5 2.9 1.3 2.9 H13.8 Q14.6 2.9 14.6 3.7 V12.6 Q14.6 13.7 13.5 13.7 H1.6 Q0.5 13.7 0.5 12.6 Z" fill="url(#fg)"/></svg><span class="lbl">com.apple.b…dassets.user</span><svg class="ch" style="left:195.3px" width="6" height="8" viewBox="0 0 6 8"><path d="M1.4 1.2 L4.3 4 L1.4 6.8" fill="none" stroke="#7b7b7b" stroke-width="1.5" stroke-linecap="round" stroke-linejoin="round"/></svg></div>
<div class="row" style="left:675.1px;top:193.85999999999999px;width:210px"><svg class="fi" width="15" height="14" viewBox="0 0 15 14"><path d="M0.5 1.2 Q0.5 0.2 1.5 0.2 H5.8 Q6.4 0.2 6.9 0.7 L7.6 1.7 H13.5 Q14.6 1.7 14.6 2.8 V12.6 Q14.6 13.7 13.5 13.7 H1.6 Q0.5 13.7 0.5 12.6 Z" fill="#4b9de0"/><path d="M0.5 3.7 Q0.5 2.9 1.3 2.9 H13.8 Q14.6 2.9 14.6 3.7 V12.6 Q14.6 13.7 13.5 13.7 H1.6 Q0.5 13.7 0.5 12.6 Z" fill="url(#fg)"/></svg><span class="lbl">com.apple.idleassetsd</span><svg class="ch" style="left:195.3px" width="6" height="8" viewBox="0 0 6 8"><path d="M1.4 1.2 L4.3 4 L1.4 6.8" fill="none" stroke="#7b7b7b" stroke-width="1.5" stroke-linecap="round" stroke-linejoin="round"/></svg></div>
<div class="row" style="left:675.1px;top:216.17px;width:210px"><svg class="fi" width="15" height="14" viewBox="0 0 15 14"><path d="M0.5 1.2 Q0.5 0.2 1.5 0.2 H5.8 Q6.4 0.2 6.9 0.7 L7.6 1.7 H13.5 Q14.6 1.7 14.6 2.8 V12.6 Q14.6 13.7 13.5 13.7 H1.6 Q0.5 13.7 0.5 12.6 Z" fill="#4b9de0"/><path d="M0.5 3.7 Q0.5 2.9 1.3 2.9 H13.8 Q14.6 2.9 14.6 3.7 V12.6 Q14.6 13.7 13.5 13.7 H1.6 Q0.5 13.7 0.5 12.6 Z" fill="url(#fg)"/></svg><span class="lbl">com.apple.TCC</span><svg class="ch" style="left:195.3px" width="6" height="8" viewBox="0 0 6 8"><path d="M1.4 1.2 L4.3 4 L1.4 6.8" fill="none" stroke="#7b7b7b" stroke-width="1.5" stroke-linecap="round" stroke-linejoin="round"/></svg></div>
<div class="row" style="left:675.1px;top:238.48px;width:210px"><svg class="fi" width="15" height="14" viewBox="0 0 15 14"><path d="M0.5 1.2 Q0.5 0.2 1.5 0.2 H5.8 Q6.4 0.2 6.9 0.7 L7.6 1.7 H13.5 Q14.6 1.7 14.6 2.8 V12.6 Q14.6 13.7 13.5 13.7 H1.6 Q0.5 13.7 0.5 12.6 Z" fill="#4b9de0"/><path d="M0.5 3.7 Q0.5 2.9 1.3 2.9 H13.8 Q14.6 2.9 14.6 3.7 V12.6 Q14.6 13.7 13.5 13.7 H1.6 Q0.5 13.7 0.5 12.6 Z" fill="url(#fg)"/></svg><span class="lbl">com.apple.TVIdleScreen</span><svg class="ch" style="left:195.3px" width="6" height="8" viewBox="0 0 6 8"><path d="M1.4 1.2 L4.3 4 L1.4 6.8" fill="none" stroke="#7b7b7b" stroke-width="1.5" stroke-linecap="round" stroke-linejoin="round"/></svg></div>
<div class="row" style="left:675.1px;top:260.78999999999996px;width:210px"><svg class="fi" width="15" height="14" viewBox="0 0 15 14"><path d="M0.5 1.2 Q0.5 0.2 1.5 0.2 H5.8 Q6.4 0.2 6.9 0.7 L7.6 1.7 H13.5 Q14.6 1.7 14.6 2.8 V12.6 Q14.6 13.7 13.5 13.7 H1.6 Q0.5 13.7 0.5 12.6 Z" fill="#4b9de0"/><path d="M0.5 3.7 Q0.5 2.9 1.3 2.9 H13.8 Q14.6 2.9 14.6 3.7 V12.6 Q14.6 13.7 13.5 13.7 H1.6 Q0.5 13.7 0.5 12.6 Z" fill="url(#fg)"/></svg><span class="lbl">CrashReporter</span><svg class="ch" style="left:195.3px" width="6" height="8" viewBox="0 0 6 8"><path d="M1.4 1.2 L4.3 4 L1.4 6.8" fill="none" stroke="#7b7b7b" stroke-width="1.5" stroke-linecap="round" stroke-linejoin="round"/></svg></div>
<div class="row" style="left:675.1px;top:283.1px;width:210px"><svg class="fi" width="15" height="14" viewBox="0 0 15 14"><path d="M0.5 1.2 Q0.5 0.2 1.5 0.2 H5.8 Q6.4 0.2 6.9 0.7 L7.6 1.7 H13.5 Q14.6 1.7 14.6 2.8 V12.6 Q14.6 13.7 13.5 13.7 H1.6 Q0.5 13.7 0.5 12.6 Z" fill="#4b9de0"/><path d="M0.5 3.7 Q0.5 2.9 1.3 2.9 H13.8 Q14.6 2.9 14.6 3.7 V12.6 Q14.6 13.7 13.5 13.7 H1.6 Q0.5 13.7 0.5 12.6 Z" fill="url(#fg)"/></svg><span class="lbl">iLifeMediaBrowser</span><svg class="ch" style="left:195.3px" width="6" height="8" viewBox="0 0 6 8"><path d="M1.4 1.2 L4.3 4 L1.4 6.8" fill="none" stroke="#7b7b7b" stroke-width="1.5" stroke-linecap="round" stroke-linejoin="round"/></svg></div>
<div class="row" style="left:675.1px;top:305.40999999999997px;width:210px"><svg class="fi" width="15" height="14" viewBox="0 0 15 14"><path d="M0.5 1.2 Q0.5 0.2 1.5 0.2 H5.8 Q6.4 0.2 6.9 0.7 L7.6 1.7 H13.5 Q14.6 1.7 14.6 2.8 V12.6 Q14.6 13.7 13.5 13.7 H1.6 Q0.5 13.7 0.5 12.6 Z" fill="#4b9de0"/><path d="M0.5 3.7 Q0.5 2.9 1.3 2.9 H13.8 Q14.6 2.9 14.6 3.7 V12.6 Q14.6 13.7 13.5 13.7 H1.6 Q0.5 13.7 0.5 12.6 Z" fill="url(#fg)"/></svg><span class="lbl">Mica</span><svg class="ch" style="left:195.3px" width="6" height="8" viewBox="0 0 6 8"><path d="M1.4 1.2 L4.3 4 L1.4 6.8" fill="none" stroke="#7b7b7b" stroke-width="1.5" stroke-linecap="round" stroke-linejoin="round"/></svg></div>
<div class="row" style="left:675.1px;top:327.71999999999997px;width:210px"><svg class="fi" width="15" height="14" viewBox="0 0 15 14"><path d="M0.5 1.2 Q0.5 0.2 1.5 0.2 H5.8 Q6.4 0.2 6.9 0.7 L7.6 1.7 H13.5 Q14.6 1.7 14.6 2.8 V12.6 Q14.6 13.7 13.5 13.7 H1.6 Q0.5 13.7 0.5 12.6 Z" fill="#4b9de0"/><path d="M0.5 3.7 Q0.5 2.9 1.3 2.9 H13.8 Q14.6 2.9 14.6 3.7 V12.6 Q14.6 13.7 13.5 13.7 H1.6 Q0.5 13.7 0.5 12.6 Z" fill="url(#fg)"/></svg><span class="lbl">Mozilla</span><svg class="ch" style="left:195.3px" width="6" height="8" viewBox="0 0 6 8"><path d="M1.4 1.2 L4.3 4 L1.4 6.8" fill="none" stroke="#7b7b7b" stroke-width="1.5" stroke-linecap="round" stroke-linejoin="round"/></svg></div>
<div class="sel selb" style="left:669.2px;top:350.93px;width:212.3px"></div>
<div class="row" style="left:675.1px;top:350.03px;width:210px"><svg class="fi" width="15" height="14" viewBox="0 0 15 14"><path d="M0.5 1.2 Q0.5 0.2 1.5 0.2 H5.8 Q6.4 0.2 6.9 0.7 L7.6 1.7 H13.5 Q14.6 1.7 14.6 2.8 V12.6 Q14.6 13.7 13.5 13.7 H1.6 Q0.5 13.7 0.5 12.6 Z" fill="#4b9de0"/><path d="M0.5 3.7 Q0.5 2.9 1.3 2.9 H13.8 Q14.6 2.9 14.6 3.7 V12.6 Q14.6 13.7 13.5 13.7 H1.6 Q0.5 13.7 0.5 12.6 Z" fill="url(#fg)"/></svg><span class="lbl">PenDriver</span><svg class="ch" style="left:195.3px" width="6" height="8" viewBox="0 0 6 8"><path d="M1.4 1.2 L4.3 4 L1.4 6.8" fill="none" stroke="#b9c4e6" stroke-width="1.5" stroke-linecap="round" stroke-linejoin="round"/></svg></div>
<div class="row" style="left:675.1px;top:372.34px;width:210px"><svg class="fi" width="15" height="14" viewBox="0 0 15 14"><path d="M0.5 1.2 Q0.5 0.2 1.5 0.2 H5.8 Q6.4 0.2 6.9 0.7 L7.6 1.7 H13.5 Q14.6 1.7 14.6 2.8 V12.6 Q14.6 13.7 13.5 13.7 H1.6 Q0.5 13.7 0.5 12.6 Z" fill="#4b9de0"/><path d="M0.5 3.7 Q0.5 2.9 1.3 2.9 H13.8 Q14.6 2.9 14.6 3.7 V12.6 Q14.6 13.7 13.5 13.7 H1.6 Q0.5 13.7 0.5 12.6 Z" fill="url(#fg)"/></svg><span class="lbl">ProApps</span><svg class="ch" style="left:195.3px" width="6" height="8" viewBox="0 0 6 8"><path d="M1.4 1.2 L4.3 4 L1.4 6.8" fill="none" stroke="#7b7b7b" stroke-width="1.5" stroke-linecap="round" stroke-linejoin="round"/></svg></div>
<div class="row" style="left:675.1px;top:394.65px;width:210px"><svg class="fi" width="15" height="14" viewBox="0 0 15 14"><path d="M0.5 1.2 Q0.5 0.2 1.5 0.2 H5.8 Q6.4 0.2 6.9 0.7 L7.6 1.7 H13.5 Q14.6 1.7 14.6 2.8 V12.6 Q14.6 13.7 13.5 13.7 H1.6 Q0.5 13.7 0.5 12.6 Z" fill="#4b9de0"/><path d="M0.5 3.7 Q0.5 2.9 1.3 2.9 H13.8 Q14.6 2.9 14.6 3.7 V12.6 Q14.6 13.7 13.5 13.7 H1.6 Q0.5 13.7 0.5 12.6 Z" fill="url(#fg)"/></svg><span class="lbl">regid.1986-12.com.adobe</span><svg class="ch" style="left:195.3px" width="6" height="8" viewBox="0 0 6 8"><path d="M1.4 1.2 L4.3 4 L1.4 6.8" fill="none" stroke="#7b7b7b" stroke-width="1.5" stroke-linecap="round" stroke-linejoin="round"/></svg></div>
<div class="row" style="left:675.1px;top:416.96px;width:210px"><svg class="fi" width="15" height="14" viewBox="0 0 15 14"><path d="M0.5 1.2 Q0.5 0.2 1.5 0.2 H5.8 Q6.4 0.2 6.9 0.7 L7.6 1.7 H13.5 Q14.6 1.7 14.6 2.8 V12.6 Q14.6 13.7 13.5 13.7 H1.6 Q0.5 13.7 0.5 12.6 Z" fill="#4b9de0"/><path d="M0.5 3.7 Q0.5 2.9 1.3 2.9 H13.8 Q14.6 2.9 14.6 3.7 V12.6 Q14.6 13.7 13.5 13.7 H1.6 Q0.5 13.7 0.5 12.6 Z" fill="url(#fg)"/></svg><span class="lbl">Script Editor</span><svg class="ch" style="left:195.3px" width="6" height="8" viewBox="0 0 6 8"><path d="M1.4 1.2 L4.3 4 L1.4 6.8" fill="none" stroke="#7b7b7b" stroke-width="1.5" stroke-linecap="round" stroke-linejoin="round"/></svg></div>
<div class="row" style="left:922.5px;top:60px"><svg class="abs" style="left:2.9px;top:4.9px" width="12" height="12" viewBox="0 0 12 12"><rect x="0" y="0" width="12" height="11.5" rx="2" fill="#070707"/><path d="M2.6 2.2 L5.2 5.0 M5.2 2.2 L2.6 5.0 M6.4 5.0 V2.4 H8.4 Q9.6 2.4 9.6 3.6 Q9.6 4.6 8.4 4.6 H6.6" stroke="#9a9a9a" stroke-width="0.6" fill="none"/><path d="M1.8 7.0 V9.6 M1.8 7.2 H3.3 Q4.2 7.2 4.2 8.0 Q4.2 8.8 3.3 8.8 H1.8 M5.0 8.0 H7.0 Q7.0 7.0 6.0 7.0 Q5.0 7.0 5.0 8.0 Q5.0 8.9 6.1 8.9 M7.8 8.9 V7.0 M7.8 7.6 Q8.2 7.0 9.0 7.0 Q9.9 7.0 9.9 7.8 V8.9" stroke="#9a9a9a" stroke-width="0.6" fill="none"/></svg><span class="lbl">PenTablet_Driver</span></div>
<div class="row" style="left:922.5px;top:82.25px"><svg class="abs" style="left:1.3px;top:3.75px" width="15" height="15" viewBox="0 0 15 15"><rect x="0.8" y="0.8" width="12.8" height="12.8" rx="3" fill="#dfe7ee" stroke="#f7f9fb" stroke-width="1.6"/><circle cx="7.2" cy="7.2" r="2.2" fill="#cfdbe4"/></svg><span class="lbl">PenTabletInfo</span></div>
<div class="sb" style="left:646.9px;top:57.2px;height:99px"></div>
<div class="sb" style="left:895.2px;top:57.2px;height:306px"></div>
<div class="htrack"></div><div class="hthumb"></div>
<div class="abs" style="left:945.3px;top:14px;width:194.7px;height:27.8px;border-radius:6px;border:1px solid #474747;background:#393939"></div>
<svg class="abs" style="left:948px;top:18px" width="20" height="20" viewBox="948 18 20 20" fill="none" stroke="#a6a6a6" stroke-width="1.4" stroke-linecap="round"><circle cx="957.6" cy="26.9" r="4.8"/><path d="M961.1 30.4 L964.7 34"/></svg>
<div class="abs" style="left:972.6px;top:21.0px;font-size:14px;letter-spacing:-0.15px;line-height:16px;color:#7c7c7c">Search</div>
</div></div><div class="border"></div></body></html>
